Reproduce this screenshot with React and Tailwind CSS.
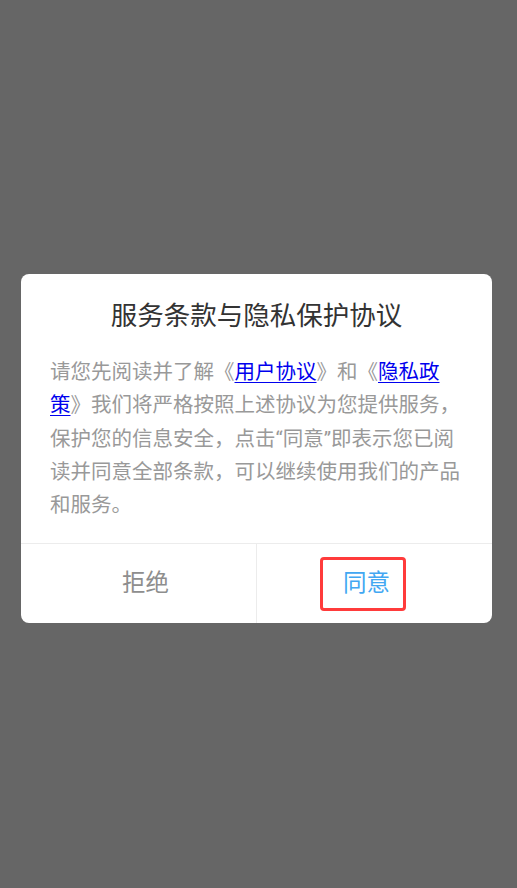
import React from 'react';

const FONT = "font-['Roboto','Noto_Sans_CJK_SC',sans-serif]";

const PolicyLink = ({ children }) => (
  <a href="#" className="text-[#0000ee] underline underline-offset-[3px] decoration-1">
    {children}
  </a>
);

const PrivacyDialog = () => {
  return (
    <div className="ml-[21px] w-[471px] rounded-[8px] bg-white overflow-hidden">
      <h1 className="pt-[22px] text-center text-[26.5px] leading-[40px] text-[#333333] font-normal">
        服务条款与隐私保护协议
      </h1>

      <p className="mt-[20px] px-[29px] pb-[21px] text-[20.5px] leading-[33.25px] text-[#999999]">
        请您先阅读并了解《<PolicyLink>用户协议</PolicyLink>》和《<PolicyLink>隐私政策</PolicyLink>》我们将严格按照上述协议为您提供服务，保护您的信息安全，点击“同意”即表示您已阅读并同意全部条款，可以继续使用我们的产品和服务。
      </p>

      <div className="flex border-t border-[#ececec] h-[80px]">
        <button className="w-[236px] shrink-0 flex items-center justify-center pl-[14px] border-r border-[#ececec] text-[23.5px] text-[#8e8e8e]">
          拒绝
        </button>
        <div className="flex-1 flex items-center justify-center pr-[23px]">
          <button className="w-[86px] h-[54px] flex items-center justify-center pl-[7px] border-[3px] border-[#ff3b3b] rounded-[4px] text-[23.5px] text-[#42a7f2]">
            同意
          </button>
        </div>
      </div>
    </div>
  );
};

export default function App() {
  return (
    <div className={`min-h-screen w-[517px] h-[888px] bg-[#666666] pt-[274px] ${FONT}`}>
      <PrivacyDialog />
    </div>
  );
}
